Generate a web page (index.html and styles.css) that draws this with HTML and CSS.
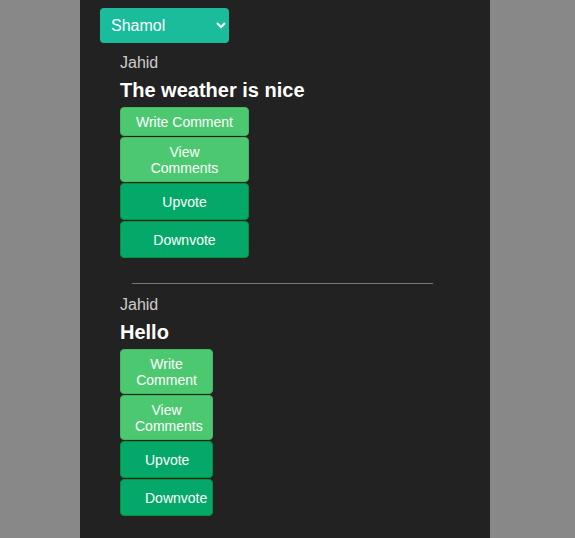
FILE: index.html
```html
<!DOCTYPE html>
<html>
<head>
<meta charset="utf-8">
<link rel="stylesheet" href="styles.css">
</head>
<body>
<div class="panel">
  <select class="picker">
    <option>Shamol</option>
  </select>
  <div class="post">
    <div class="author">Jahid</div>
    <h2 class="title">The weather is nice</h2>
    <div class="actions wide">
      <button class="btn light">Write Comment</button>
      <button class="btn light">View Comments</button>
      <button class="btn dark">Upvote</button>
      <button class="btn dark">Downvote</button>
    </div>
  </div>
  <hr class="sep">
  <div class="post">
    <div class="author">Jahid</div>
    <h2 class="title">Hello</h2>
    <div class="actions narrow">
      <button class="btn light">Write Comment</button>
      <button class="btn light">View Comments</button>
      <button class="btn dark">Upvote</button>
      <button class="btn dark">Downvote</button>
    </div>
  </div>
</div>
</body>
</html>
```
FILE: styles.css
```css
html, body {
  margin: 0;
  padding: 0;
  background: #888888;
  font-family: "Liberation Sans", Arial, sans-serif;
}
.panel {
  margin-left: 80px;
  width: 410px;
  min-height: 538px;
  box-sizing: border-box;
  background: #222222;
  padding: 8px 20px 20px 20px;
}
.picker {
  display: block;
  width: 129px;
  height: 35px;
  background: #1abc9c;
  color: #ffffff;
  border: none;
  border-radius: 4px;
  font-family: "Liberation Sans", Arial, sans-serif;
  font-size: 16px;
  padding: 0 7px;
}
.post {
  margin-left: 20px;
}
.author {
  margin-top: 11px;
  color: #cccccc;
  font-size: 16px;
  line-height: 18px;
}
.title {
  margin: 7px 0 5px 0;
  color: #ffffff;
  font-size: 20px;
  font-weight: bold;
  line-height: 23px;
}
.actions {
  display: flex;
  flex-direction: column;
  gap: 1px;
}
.actions.wide {
  width: 129px;
}
.actions.narrow {
  width: 93px;
}
.btn {
  display: block;
  width: 100%;
  box-sizing: border-box;
  border-radius: 4px;
  color: #ffffff;
  font-family: "Liberation Sans", Arial, sans-serif;
  font-size: 14px;
  line-height: 16px;
  text-align: center;
}
.btn.light {
  background: #4cc970;
  border: 1px solid #45b865;
  padding: 6px 14px 5px 14px;
}
.btn.dark {
  background: #04a96a;
  border: 1px solid #07913f;
  padding: 10px 24px 9px 24px;
}
.sep {
  margin: 25px 0 12px 32px;
  width: 301px;
  border: none;
  border-top: 1px solid #777777;
  height: 0;
}
```
